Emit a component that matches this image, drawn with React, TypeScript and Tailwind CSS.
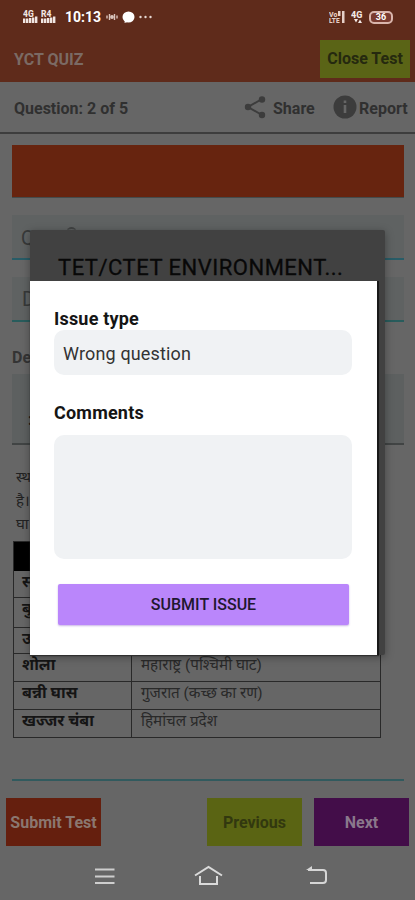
import { ReactNode } from 'react';
import clsx from 'clsx';

const rows = [
    { name: 'स्', place: '', height: 'h-[27px]' },
    { name: 'बु', place: '', height: 'h-[30px]' },
    { name: 'उ', place: '', height: 'h-[26px]' },
    { name: 'शोला', place: 'महाराष्ट्र (पश्चिमी घाट)', height: 'h-[28px]' },
    { name: 'बन्नी घास', place: 'गुजरात (कच्छ का रण)', height: 'h-[28px]' },
    { name: 'खज्जर चंबा', place: 'हिमांचल प्रदेश', height: 'h-[27px]' }
];

const Signal = ({ label }: { label: string }) => (
    <svg width="15" height="14" viewBox="0 0 15 14" fill="#f1e6e2">
        <text x="0" y="7" fontSize="8.500" fontWeight="800" fontFamily="Roboto, sans-serif">{label}</text>
        <path d="M0 8.500h2.400v4.500H0zM3 8.500h2.400v4.500H3zM6 8h2.400v5H6zM9 7.500h2.400v5.500H9zM12 6.500h2.400v6.500H12z" />
    </svg>
);

const StatusBar = () => (
    <div className="flex h-[34px] items-center pl-[23px] pr-[22px] text-[#fff]">
        <Signal label="4G" />
        <div className="ml-[3px]"><Signal label="R4" /></div>
        <span className="ml-[9px] w-[36px] whitespace-nowrap text-[14px] font-bold">10:13</span>
        <svg className="ml-[4px]" width="14" height="12" viewBox="0 0 14 12" fill="none" stroke="#d9c4bc" strokeWidth="1.400">
            <circle cx="7" cy="6" r="1.200" fill="#d9c4bc" />
            <path d="M4.500 3v6M9.500 3v6M2 4.500v3M12 4.500v3" />
        </svg>
        <svg className="ml-[3px]" width="13" height="13" viewBox="0 0 13 13" fill="#fff">
            <ellipse cx="6.500" cy="6" rx="6" ry="5.500" />
            <path d="M3 9l-0.500 3 4-1.500z" />
        </svg>
        <svg className="ml-[4px]" width="13" height="4" viewBox="0 0 13 4" fill="#e6d8d3">
            <circle cx="1.500" cy="2" r="1.200" />
            <circle cx="6.500" cy="2" r="1.200" />
            <circle cx="11.500" cy="2" r="1.200" />
        </svg>
        <div className="ml-auto flex items-center gap-[5px]">
            <svg width="17" height="14" viewBox="0 0 17 14" fill="#e5cfc8" fontFamily="Roboto, sans-serif" fontWeight="800">
                <text x="0" y="6.500" fontSize="7">Vo</text>
                <text x="0" y="13" fontSize="6.500">LTE</text>
                <path d="M9 1h2.500v5H9zM13 1h2.500v12H13z" />
            </svg>
            <svg width="13" height="14" viewBox="0 0 13 14" fill="#f3e9e6" fontFamily="Roboto, sans-serif" fontWeight="800">
                <text x="0" y="8" fontSize="9">4G</text>
                <path d="M3 9h4l-2 3.500zM7 13l2-3.500 2 3.500z" />
            </svg>
            <span className="flex h-[13px] w-[24px] items-center justify-center rounded-[5px] border-2 border-[#d9b5ac] bg-[#7a3b30] text-[9px] font-bold leading-[9px] text-[#fff]">36</span>
        </div>
    </div>
);

const FooterButton = ({ className, children }: { className: string; children: ReactNode }) => (
    <button className={clsx('h-[48px] w-[95px] whitespace-nowrap pt-[2px] text-[16px] font-bold', className)}>{children}</button>
);

const IssueDialog = () => (
    <div
        role="dialog"
        aria-label="Report issue"
        className="absolute left-[30px] top-[230px] h-[425px] w-[355px] rounded-[2px] bg-[#414141] shadow-[0_2px_8px_rgba(0,0,0,0.35)]"
    >
        <h2 className="h-[51px] whitespace-nowrap pl-[28px] pt-[22px] text-[22px] leading-[32px] tracking-[0.5px] text-[#080808] [-webkit-text-stroke:0.3px_#080808]">TET/CTET ENVIRONMENT...</h2>
        <div className="h-[374px] w-[349px] border-r-2 border-[#191919] bg-white px-6 pt-[25px] shadow-[0_1px_1px_#303030]">
            <label className="block h-6 text-[18px] font-bold leading-[25px] tracking-[0.2px] text-[#151515]">Issue type</label>
            <div className="flex h-[45px] w-[298px] items-center rounded-[10px] bg-[#f0f2f4] pl-[9px] pt-px text-[18px] tracking-[0.15px] text-[#333]">Wrong question</div>
            <label className="mt-[25px] block h-6 text-[18px] font-bold leading-[25px] tracking-[0.2px] text-[#151515]">Comments</label>
            <div className="mt-[11px] h-[124px] w-[298px] rounded-[10px] bg-[#f0f2f4]" />
            <button className="ml-[4px] mt-[25px] block h-[41px] w-[291px] rounded-[2px] bg-[#ba86fb] pt-px text-[16px] font-medium text-[#21172e] shadow-[0_1px_2px_rgba(120,70,190,0.4)]">
                SUBMIT ISSUE
            </button>
        </div>
    </div>
);

const App = () => {
    return (
        <div className="relative flex h-[900px] w-[415px] flex-col overflow-hidden bg-[#666] font-['Roboto','Noto_Sans',sans-serif]">
            <header className="h-[82px] bg-[#5f2b1b]">
                <StatusBar />
                <div className="flex h-[48px] items-center justify-between pl-[14px] pr-[5px] pt-[1px]">
                    <h1 className="pt-[2px] text-[16px] font-bold text-[#7b6a64]">YCT QUIZ</h1>
                    <button className="h-[38px] w-[90px] whitespace-nowrap bg-[#5a6416] text-[16px] font-bold text-[#25290f]">Close Test</button>
                </div>
            </header>

            <div className="flex h-[52px] items-center border-b-2 border-[#3d3d3d] pl-[14px] text-[16px] font-bold text-[#303030]">
                <span className="w-[230px] whitespace-nowrap pt-[3px]">Question: 2 of 5</span>
                <svg width="22" height="24" viewBox="0 0 22 24" fill="#3c3c3c">
                    <path d="M18 4L4 12l14 8" fill="none" stroke="#3c3c3c" strokeWidth="2" />
                    <circle cx="18" cy="4.500" r="3.200" />
                    <circle cx="4" cy="12" r="3.200" />
                    <circle cx="18" cy="20" r="3.200" />
                </svg>
                <span className="ml-[7px] w-[53px] pt-[3px]">Share</span>
                <svg className="ml-[7px]" width="24" height="24" viewBox="0 0 24 24">
                    <circle cx="12" cy="12" r="11.500" fill="#3c3c3c" />
                    <path d="M10.700 5.500h2.600v2.600h-2.600zM10.700 10h2.600v8h-2.600z" fill="#666" />
                </svg>
                <span className="ml-[2px] pt-[3px]">Report</span>
            </div>

            <main className="h-[648px] px-[12px] pt-[11px]">
                <div className="h-[53px] w-[392px] border-b border-[#454b4b] bg-[#67240f]" />
                <div className="mt-[17px] flex h-[45px] w-[392px] border-b-2 border-[#285c67] bg-[#5f6262] pl-[9px] text-[20px] leading-[46px] text-[#373939]">
                    Q
                    <span className="ml-[32px] mt-[12px] h-[7px] w-[9px] rounded-t-full border-t-2 border-[#414343]" />
                </div>
                <div className="mt-[17px] h-[45px] w-[392px] border-b-2 border-[#285c5c] bg-[#5f6262] pl-[10px] text-[20px] leading-[45px] text-[#373939]">D</div>
                <div className="mt-[23px] h-[25px] text-[16px] font-bold leading-[25px] text-[#343434]">De</div>
                <div className="mt-[4px] h-[71px] w-[392px] border-b-2 border-[#414444] bg-[#5d6060] pl-[16px] pt-[34px] text-[16px] font-bold leading-[24px] text-[#111]">:</div>
                <div className="h-[96px] overflow-hidden pl-[4px] pt-[21px] text-[15px] leading-[23.5px] text-[#222]">
                    <p>स्थ</p>
                    <p>है।</p>
                    <p>घा</p>
                </div>
                <div className="ml-px w-[368px] border border-[#292929]">
                    <div className="h-[29px] bg-black" />
                    {rows.map((row) => (
                        <div key={row.name} className={clsx('flex border-b border-[#292929] leading-[22px] last:border-b-0', row.height)}>
                            <div className="h-full w-[118px] whitespace-nowrap border-r border-[#292929] pl-[8px] text-[16px] font-bold text-[#151515]">{row.name}</div>
                            <div className="whitespace-nowrap pl-[9px] text-[15.25px] text-[#292929]">{row.place}</div>
                        </div>
                    ))}
                </div>
                <div className="mt-[41px] h-[2px] w-[392px] bg-[#315a5e]" />
            </main>

            <footer className="flex h-[64px] items-end px-[6px]">
                <FooterButton className="bg-[#651f0e] text-[#8b7770]">Submit Test</FooterButton>
                <FooterButton className="ml-[106px] bg-[#5a6413] text-[#32380f]">Previous</FooterButton>
                <FooterButton className="ml-[12px] bg-[#430d49] text-[#8a788c]">Next</FooterButton>
            </footer>

            <nav className="flex h-[54px] items-start pl-[95px] pt-[19px]">
                <svg className="mt-[2px]" width="20" height="20" viewBox="0 0 20 20" stroke="#cecece" strokeWidth="2.200">
                    <path d="M0 2.500h19.500M0 9.500h19.500M0 16h19.500" />
                </svg>
                <svg className="ml-[79px]" width="29" height="22" viewBox="0 0 29 22" fill="none" stroke="#dadada" strokeWidth="2">
                    <path d="M1 10.500L14.500 2 28 10.500M6 11v8h17v-8" />
                </svg>
                <svg className="ml-[83px]" width="22" height="22" viewBox="0 0 22 22" fill="none" stroke="#d6d6d6" strokeWidth="2">
                    <path d="M2 5h15q3 0 3 3v7q0 3-3 3H4" />
                    <path d="M0 5l6-4v4z" fill="#d6d6d6" stroke="none" />
                </svg>
            </nav>

            <IssueDialog />
        </div>
    );
};

export default App;
